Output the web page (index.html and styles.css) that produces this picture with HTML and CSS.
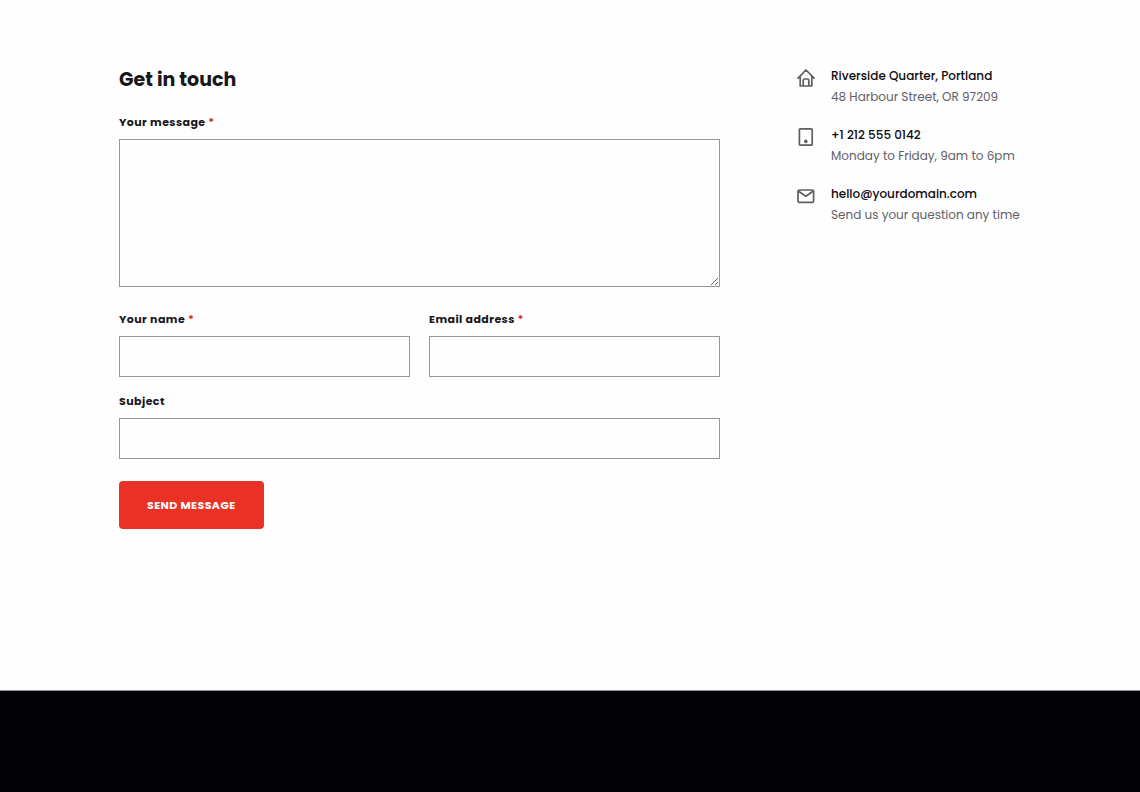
FILE: index.html
```
<!DOCTYPE html>
<html lang="en">
<head>
    <meta charset="UTF-8">
    <meta name="viewport" content="width=device-width, initial-scale=1">
    <title>Get in touch</title>
    <link rel="stylesheet" href="styles.css">
</head>
<body>
<main class="contact">

    <form class="contact-form" action="#" method="post">
        <h2>Get in touch</h2>

        <div class="field field-message">
            <label for="message">Your message <span class="required">*</span></label>
            <textarea id="message" name="message" required></textarea>
        </div>

        <div class="field-row">
            <div class="field">
                <label for="name">Your name <span class="required">*</span></label>
                <input type="text" id="name" name="name" required>
            </div>
            <div class="field">
                <label for="email">Email address <span class="required">*</span></label>
                <input type="email" id="email" name="email" required>
            </div>
        </div>

        <div class="field">
            <label for="subject">Subject</label>
            <input type="text" id="subject" name="subject">
        </div>

        <button class="btn" type="submit">SEND MESSAGE</button>
    </form>

    <aside class="contact-info">
        <div class="info">
            <svg class="icon" viewBox="0 0 18 20" aria-hidden="true">
                <path d="M1 10.2 9 2l8 8.2M3.2 8.4V18h11.6V8.4M6.2 18v-5.8q0-1.2 1.2-1.2h3.2q1.2 0 1.2 1.2V18"/>
            </svg>
            <div>
                <h3>Riverside Quarter, Portland</h3>
                <p>48 Harbour Street, OR 97209</p>
            </div>
        </div>
        <div class="info">
            <svg class="icon" viewBox="0 0 18 20" aria-hidden="true">
                <rect x="2.4" y="1.8" width="12.8" height="16.4" rx="1"/>
                <circle class="dot" cx="8.8" cy="14.4" r="1.8"/>
            </svg>
            <div>
                <h3>+1 212 555 0142</h3>
                <p>Monday to Friday, 9am to 6pm</p>
            </div>
        </div>
        <div class="info">
            <svg class="icon" viewBox="0 0 18 20" aria-hidden="true">
                <rect x="1" y="4" width="15.6" height="12.4" rx="1.4"/>
                <path d="M1.6 5.2 8.8 10.2l7.2-5"/>
            </svg>
            <div>
                <h3>hello@yourdomain.com</h3>
                <p>Send us your question any time</p>
            </div>
        </div>
    </aside>

</main>
<footer class="footer"></footer>
</body>
</html>
```

FILE: styles.css
```
*{box-sizing: border-box;}
body,h2,h3,p{margin: 0;}
body{
    display: flex;
    flex-direction: column;
    min-height: 100vh;
    background-color: #fefefe;
    font-family: Poppins, Inter, sans-serif;
    font-size: 12px;
    color: #18161b;
}

.contact{
    display: grid;
    grid-template-columns: 1fr 224px;
    gap: 77px;
    align-items: start;
    width: 100%;
    max-width: 950px;
    margin: 0 auto;
    padding: 65px 24px 161px;
}

.contact-form h2{
    margin-bottom: 17px;
    font-size: 19px;
    line-height: 30px;
    font-weight: 700;
}
.field{
    margin-bottom: 14px;
}
.field-message{
    margin-bottom: 22px;
}
.field-row{
    display: grid;
    grid-template-columns: 1fr 1fr;
    gap: 19px;
}
.field-row .field{
    margin-bottom: 0;
}
.field-row + .field{
    margin-top: 14px;
}
.field label{
    display: block;
    margin-bottom: 7px;
    font-size: 11px;
    line-height: 20px;
    font-weight: 700;
    letter-spacing: .04em;
}
.required{
    color: #e0283a;
}
.field input,.field textarea{
    display: block;
    width: 100%;
    height: 41px;
    padding: 8px 12px;
    border: 1px solid #97949a;
    border-radius: 0;
    background-color: #fefefe;
    font: inherit;
    color: inherit;
}
.field textarea{
    height: 148px;
    resize: vertical;
}
.btn{
    display: block;
    margin-top: 22px;
    padding: 14px 28px;
    border: none;
    border-radius: 4px;
    background-color: #ea3126;
    font-family: inherit;
    font-size: 11px;
    line-height: 20px;
    font-weight: 700;
    letter-spacing: .04em;
    color: #fff;
    cursor: pointer;
}

.contact-info{
    display: grid;
    gap: 17px;
}
.info{
    display: flex;
    gap: 16px;
}
.info h3,.info p{
    font-size: 12px;
    line-height: 21px;
}
.info h3{
    font-weight: 500;
    color: #0e0c11;
}
.info p{
    color: #626065;
}
.icon{
    flex: none;
    width: 18px;
    height: 20px;
    margin-top: 3px;
    fill: none;
    stroke: #5f5d62;
    stroke-width: 1.7;
    stroke-linejoin: round;
    stroke-linecap: round;
}
.icon .dot{
    fill: #5f5d62;
    stroke: none;
}

.footer{
    flex: 1;
    min-height: 100px;
    border-top: 1px solid #8b9394;
    background-color: #020106;
}

@media (max-width: 760px){
    .contact{
        grid-template-columns: 1fr;
        gap: 40px;
    }
}
```
